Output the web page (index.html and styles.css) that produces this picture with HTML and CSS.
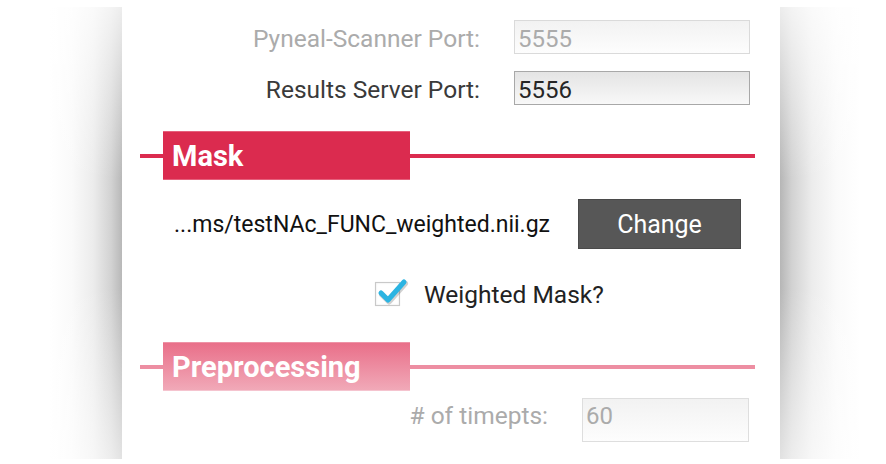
FILE: index.html
```html
<!DOCTYPE html>
<html>
<head>
<meta charset="utf-8">
<link rel="stylesheet" href="styles.css">
</head>
<body>
<div class="page">
  <div class="shade shade-left"></div>
  <div class="panel">
    <div class="field-row">
      <div class="label disabled">Pyneal-Scanner Port:</div>
      <div class="input">5555</div>
    </div>
    <div class="field-row">
      <div class="label">Results Server Port:</div>
      <div class="input active">5556</div>
    </div>

    <div class="section-head">
      <div class="head-line lead"></div>
      <div class="head-box">Mask</div>
      <div class="head-line rest"></div>
    </div>

    <div class="file-row">
      <div class="file-name">...ms/testNAc_FUNC_weighted.nii.gz</div>
      <div class="button">Change</div>
    </div>

    <div class="check-row">
      <div class="checkbox">
        <span class="check-box"></span>
        <svg class="check-mark" width="36" height="30" viewBox="0 0 36 30">
          <path d="M6 16 L13 23 L29 5" fill="none" stroke="rgba(0,0,0,0.18)" stroke-width="6" stroke-linecap="round" stroke-linejoin="round" transform="translate(1,1.5)"/>
          <path d="M6 16 L13 23 L29 5" fill="none" stroke="#2bb4e2" stroke-width="5" stroke-linecap="round" stroke-linejoin="round"/>
        </svg>
      </div>
      <div class="check-label">Weighted Mask?</div>
    </div>

    <div class="section-head faded">
      <div class="head-line lead"></div>
      <div class="head-box">Preprocessing</div>
      <div class="head-line rest"></div>
    </div>

    <div class="field-row wide">
      <div class="label disabled">#&nbsp;of timepts:</div>
      <div class="input tall">60</div>
    </div>
  </div>
  <div class="shade shade-right"></div>
</div>
</body>
</html>
```

FILE: styles.css
```css
html, body {
  margin: 0;
  padding: 0;
  background: #ffffff;
}

body {
  font-family: Roboto, "Liberation Sans", sans-serif;
}

.page {
  display: flex;
  width: 886px;
  height: 464px;
  overflow: hidden;
}

.shade {
  margin-top: 7px;
  height: 452px;
}

.shade-left {
  width: 72px;
  margin-left: 50px;
  background:
    linear-gradient(to bottom, rgba(255,255,255,0.75) 0%, rgba(255,255,255,0) 38%, rgba(255,255,255,0) 62%, rgba(255,255,255,0.6) 100%),
    linear-gradient(to right, #ffffff 0%, #fafafa 30%, #ececec 60%, #d2d2d2 85%, #b8b8b8 100%);
}

.shade-right {
  width: 80px;
  background:
    linear-gradient(to bottom, rgba(255,255,255,0.75) 0%, rgba(255,255,255,0) 38%, rgba(255,255,255,0) 62%, rgba(255,255,255,0.6) 100%),
    linear-gradient(to left, #ffffff 0%, #fafafa 30%, #ececec 60%, #d2d2d2 85%, #b6b6b6 100%);
}

.panel {
  width: 658px;
  height: 464px;
  background: #ffffff;
  padding-top: 20px;
  box-sizing: border-box;
}

.field-row {
  display: grid;
  grid-template-columns: 358px 236px;
  column-gap: 34px;
  align-items: baseline;
}

.field-row + .field-row {
  margin-top: 17px;
}

.field-row.wide {
  grid-template-columns: 426px 167px;
  margin-top: 7px;
}

.label {
  text-align: right;
  font-size: 24.5px;
  color: #3a3a3a;
}

.label.disabled {
  color: #ababab;
}

.input {
  height: 34px;
  box-sizing: border-box;
  border: 1px solid #dadada;
  background: linear-gradient(to bottom, #f2f2f2, #fdfdfd);
  padding: 4px 4px 0 3px;
  font-size: 24px;
  line-height: normal;
  color: #ababab;
}

.input.active {
  border-color: #a8a8a8;
  background: linear-gradient(to bottom, #e4e4e4, #f8f8f8);
  color: #262626;
}

.input.tall {
  height: 44px;
  padding: 3px 4px 0 3px;
  border-color: #dedede;
}

.section-head {
  display: flex;
  align-items: center;
  height: 49px;
  margin: 26px 25px 0 18px;
}

.head-line {
  height: 4px;
  background: #db2b4f;
}

.head-line.lead {
  width: 23px;
}

.head-line.rest {
  flex: 1;
}

.head-box {
  width: 247px;
  height: 49px;
  box-sizing: border-box;
  padding-left: 9px;
  display: flex;
  align-items: center;
  background: #db2b4f;
  border-top: 1px solid #e5607c;
  border-bottom: 1px solid #e5607c;
  color: #ffffff;
  font-size: 29px;
  font-weight: 700;
}

.section-head.faded {
  margin-top: 36px;
}

.section-head.faded .head-line {
  background: #ed8ea2;
}

.section-head.faded .head-box {
  background: linear-gradient(to bottom, #e96f89, #f1a9b8);
  border-top-color: #ee93a6;
  border-bottom-color: #f5c4cf;
}

.file-row {
  display: flex;
  justify-content: flex-end;
  align-items: center;
  gap: 28px;
  margin-top: 19px;
  padding-right: 39px;
}

.file-name {
  font-size: 23px;
  color: #111111;
}

.button {
  width: 163px;
  height: 50px;
  box-sizing: border-box;
  display: flex;
  align-items: center;
  justify-content: center;
  background: #575757;
  border: 1px solid #4a4a4a;
  color: #ffffff;
  font-size: 25px;
}

.check-row {
  display: flex;
  align-items: center;
  height: 24px;
  margin-top: 33px;
  padding-left: 253px;
}

.checkbox {
  position: relative;
  width: 25px;
  height: 24px;
}

.check-box {
  display: block;
  width: 25px;
  height: 24px;
  box-sizing: border-box;
  border: 1px solid #c9c9c9;
  background: #ffffff;
  box-shadow: inset 0 0 2px #e0e0e0, 0 0 1px #e4e4e4;
}

.check-mark {
  position: absolute;
  left: 0;
  top: -5px;
}

.check-label {
  margin-left: 24px;
  font-size: 24.5px;
  color: #222222;
}
```
